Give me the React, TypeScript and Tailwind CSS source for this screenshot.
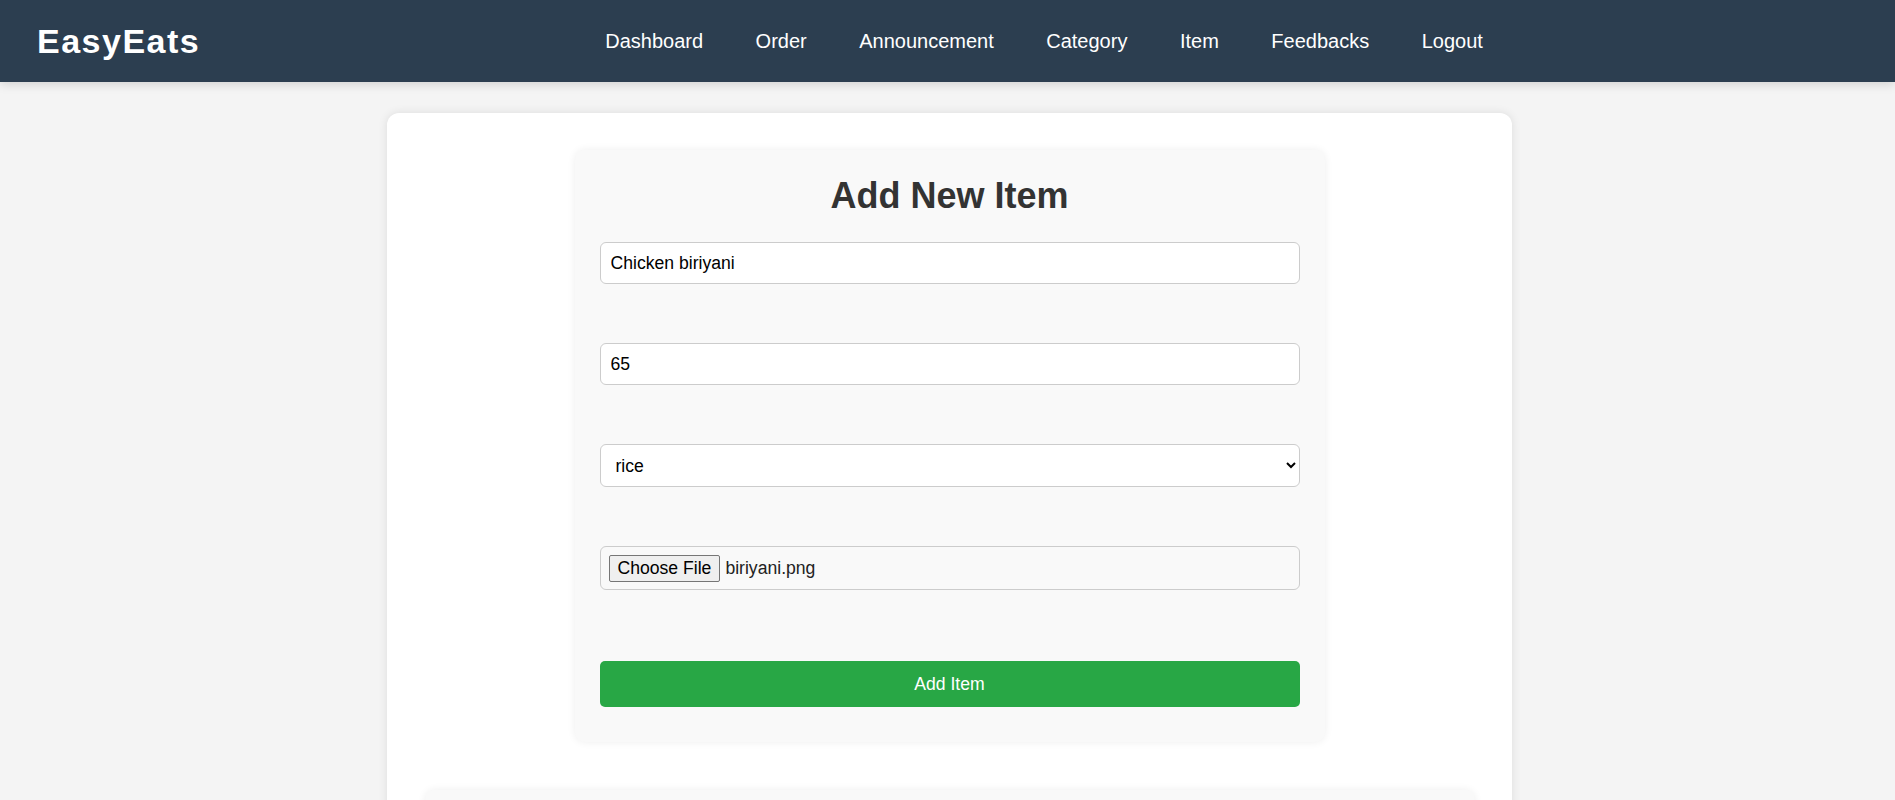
import React from 'react';

const links = ['Dashboard', 'Order', 'Announcement', 'Category', 'Item', 'Feedbacks', 'Logout'];

function Header() {
  return (
    <header className="relative z-10 flex h-[82px] items-center bg-[#2c3e50] pl-[37px] shadow-[0_2px_10px_rgba(0,0,0,0.15)]">
      <div className="text-[34px] font-bold tracking-[1.5px] text-white">EasyEats</div>
      <nav className="ml-[405px] flex gap-[52.5px] text-[20px] text-white">
        {links.map((l) => (
          <a key={l} href="#" className="leading-[23px]">
            {l}
          </a>
        ))}
      </nav>
    </header>
  );
}

function AddItemForm() {
  return (
    <div className="mx-auto w-[750px] rounded-[10px] bg-[#f9f9f9] px-[25px] pt-[25px] pb-[35px] shadow-[0_0_8px_rgba(0,0,0,0.07)]">
      <h2 className="mb-[25px] text-center text-[36px] leading-[42px] font-bold text-[#333]">Add New Item</h2>

      <form className="flex flex-col text-[17.6px]">
        <input
          type="text"
          defaultValue="Chicken biriyani"
          className="h-[42px] w-full rounded-[6px] border border-[#ccc] bg-white px-[10px] text-black outline-none"
        />
        <input
          type="text"
          defaultValue="65"
          className="mt-[59px] h-[42px] w-full rounded-[6px] border border-[#ccc] bg-white px-[10px] text-black outline-none"
        />
        <select
          defaultValue="rice"
          className="mt-[59px] h-[43px] w-full rounded-[6px] border border-[#ccc] bg-white px-[11px] text-black outline-none"
        >
          <option value="rice">rice</option>
          <option value="curry">curry</option>
          <option value="drinks">drinks</option>
        </select>

        {/* file input faked so the chosen file name shows */}
        <div className="mt-[59px] flex h-[44px] w-full items-center rounded-[6px] border border-[#ccc] px-[8px]">
          <span className="flex h-[27px] items-center rounded-[2px] border border-[#767676] bg-[#efefef] px-[8px] text-black">
            Choose File
          </span>
          <span className="ml-[5px] text-[#222]">biriyani.png</span>
        </div>

        <button
          type="button"
          className="mt-[71px] h-[46px] w-full rounded-[5px] bg-[#28a745] text-white"
        >
          Add Item
        </button>
      </form>
    </div>
  );
}

export default function App() {
  return (
    <div className="h-[800px] overflow-hidden bg-[#f4f4f4] font-['Liberation_Sans',Arial,sans-serif]">
      <Header />
      <main className="pt-[31px]">
        <div className="ml-[387px] w-[1125px] rounded-[12px] bg-white pt-[37px] pb-[40px] shadow-[0_0_10px_rgba(0,0,0,0.1)]">
          <AddItemForm />
          <div className="mx-auto mt-[48px] h-[300px] w-[1050px] rounded-[10px] bg-[#f9f9f9] shadow-[0_0_8px_rgba(0,0,0,0.07)]" />
        </div>
      </main>
    </div>
  );
}
